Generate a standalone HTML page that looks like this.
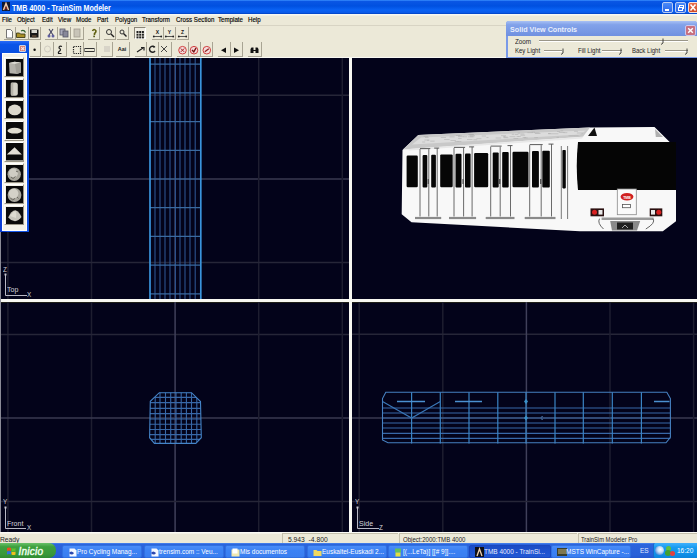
<!DOCTYPE html><html><head><meta charset="utf-8"><style>
*{margin:0;padding:0;box-sizing:border-box}
html,body{width:697px;height:558px;overflow:hidden;background:#ECE9D8;font-family:"Liberation Sans",sans-serif;position:relative}
.a{position:absolute}
#title{left:0;top:0;width:697px;height:14px;background:linear-gradient(#3a90ff 0,#0a56e4 1.5px,#0050e0 6px,#0a62f4 10px,#0a5ae8 12.5px,#0040c0 14px)}
#title .t{left:12px;top:2.5px;font-size:9px;font-weight:bold;color:#fff;white-space:nowrap;transform:scaleX(0.79);transform-origin:0 0}
#menu{left:0;top:14px;width:697px;height:12px;background:linear-gradient(#f8f8f2 0,#f8f8f2 1px,#ECE9D8 2px,#ECE9D8 11px,#d8d4c4 11.5px,#ECE9D8 12px)}
#menu span{position:absolute;top:2px;font-size:7px;color:#000;-webkit-text-stroke:0.15px #000;white-space:nowrap;transform:scaleX(0.88);transform-origin:0 0}
.b{position:absolute;border-right:1px solid #a8a493;border-bottom:1px solid #a8a493;}
#status{left:0;top:532px;width:697px;height:11px;background:linear-gradient(#fafaf4 0,#fafaf4 1px,#ECE9D8 2px)}
#status span{position:absolute;top:3.8px;font-size:6.6px;color:#222;white-space:nowrap;transform:scaleX(0.9);transform-origin:0 0}
#task{left:0;top:543px;width:697px;height:15px;background:linear-gradient(#4a88f0 0,#2c64dc 1.5px,#2860d8 12px,#2458d0 15px)}
.tb{position:absolute;top:1.5px;height:13.5px;border-radius:2px;background:linear-gradient(#4a8cf8,#3c82f4 40%,#3a7ef0);border:1px solid #3070e0}
.tb span{position:absolute;left:14px;top:2.5px;font-size:6.8px;color:#fff;white-space:nowrap;transform:scaleX(0.95);transform-origin:0 0}
.tb i{position:absolute;left:5px;top:2px;width:7px;height:8px;background:#dde8f8;border-radius:1px}
</style></head><body>
<div id="title" class="a">
<div class="a" style="left:2px;top:2px;width:8px;height:9px;background:#101830"></div>
<svg class="a" style="left:2px;top:2px" width="8" height="9"><path d="M1.5 8 L4 1.5 L6.5 8" stroke="#f0c8a8" stroke-width="1.5" fill="none"/><path d="M3.2 7.5 L4 5 L4.8 7.5" stroke="#a03020" stroke-width="0.8" fill="none"/></svg>
<div class="a t">TMB 4000 - TrainSim Modeler</div>
<div class="a" style="left:662px;top:2px;width:11px;height:11px;border-radius:2px;background:linear-gradient(#4a8af8,#2a66e8);border:1px solid #b8ccf4"><div class="a" style="left:2px;top:6px;width:4px;height:2px;background:#fff"></div></div>
<div class="a" style="left:675px;top:2px;width:11px;height:11px;border-radius:2px;background:linear-gradient(#4a8af8,#2a66e8);border:1px solid #b8ccf4"><div class="a" style="left:3px;top:2px;width:5px;height:4px;border:1px solid #fff"></div><div class="a" style="left:1.5px;top:4px;width:5px;height:4px;border:1px solid #fff;background:#3a76f0"></div></div>
<div class="a" style="left:687.5px;top:2px;width:11px;height:11px;border-radius:2px;background:linear-gradient(#e87050,#d04a28);border:1px solid #f8e0d8"></div>
<svg class="a" style="left:687.5px;top:2px" width="11" height="11"><path d="M2.5 2.5l5 6M7.5 2.5l-5 6" stroke="#fff" stroke-width="1.5"/></svg>
</div>
<div id="menu" class="a">
<span style="left:1.8px">File</span>
<span style="left:16.8px">Object</span>
<span style="left:41.5px">Edit</span>
<span style="left:58.3px">View</span>
<span style="left:75.8px">Mode</span>
<span style="left:97.3px">Part</span>
<span style="left:114.5px">Polygon</span>
<span style="left:142.3px">Transform</span>
<span style="left:175.8px">Cross Section</span>
<span style="left:217.6px">Template</span>
<span style="left:248.3px">Help</span>
</div>
<div class="b" style="left:4px;top:27px;width:12px;height:13px"></div>
<svg class="a" style="left:4px;top:27px" width="11" height="12"><path d="M2.5 2.5h4l2 2v6.5h-6z" fill="#fff" stroke="#666" stroke-width="0.9"/></svg>
<div class="b" style="left:15px;top:27px;width:14px;height:13px"></div>
<svg class="a" style="left:15px;top:27px" width="13" height="12"><path d="M1.5 6h3l1 1h4.5v3.5H1.5z" fill="#a89028" stroke="#303010" stroke-width="0.8"/><path d="M6 4 q3 -1.5 4.5 1.5" stroke="#306030" stroke-width="1.2" fill="none"/></svg>
<div class="b" style="left:28px;top:27px;width:13px;height:13px"></div>
<svg class="a" style="left:28px;top:27px" width="12" height="12"><rect x="2" y="2.5" width="8.5" height="8" fill="#181818"/><rect x="3.5" y="3" width="5.5" height="3" fill="#d8d8d0"/><rect x="4" y="8" width="4.5" height="2.5" fill="#504030"/></svg>
<div class="b" style="left:45px;top:27px;width:13px;height:13px"></div>
<svg class="a" style="left:45px;top:27px" width="12" height="12"><path d="M4 2l4 6M8 2l-4 6" stroke="#404060" stroke-width="1.1"/><circle cx="4" cy="9" r="1.5" fill="#6060a0"/><circle cx="8" cy="9" r="1.5" fill="#6060a0"/></svg>
<div class="b" style="left:58px;top:27px;width:13px;height:13px"></div>
<svg class="a" style="left:58px;top:27px" width="12" height="12"><rect x="2" y="2" width="5" height="6" fill="#aab" stroke="#556" stroke-width="0.8"/><rect x="5" y="4" width="5" height="6" fill="#889" stroke="#556" stroke-width="0.8"/></svg>
<div class="b" style="left:71px;top:27px;width:13px;height:13px"></div>
<svg class="a" style="left:71px;top:27px" width="12" height="12"><rect x="3" y="2" width="6" height="8" fill="#c8c4b8" stroke="#a09c90" stroke-width="0.8"/></svg>
<div class="b" style="left:88px;top:27px;width:12px;height:13px"></div>
<svg class="a" style="left:88px;top:27px" width="11" height="12"><path d="M4.5 4 q1.5 -3 3.5 0 q0 1.5 -1.5 2.5v1.5" stroke="#606010" stroke-width="1.6" fill="none"/><rect x="5.3" y="8.6" width="1.6" height="1.6" fill="#505010"/></svg>
<div class="b" style="left:104px;top:27px;width:12px;height:13px"></div>
<svg class="a" style="left:104px;top:27px" width="11" height="12"><circle cx="5" cy="5" r="2.5" stroke="#333" stroke-width="1" fill="none"/><path d="M7 7l3 3" stroke="#222" stroke-width="1.4"/></svg>
<div class="b" style="left:117px;top:27px;width:12px;height:13px"></div>
<svg class="a" style="left:117px;top:27px" width="11" height="12"><circle cx="5" cy="5" r="2" stroke="#333" stroke-width="1" fill="none"/><path d="M6.5 6.5l3 3" stroke="#222" stroke-width="1.4"/></svg>
<div class="b" style="left:152px;top:27px;width:12px;height:13px"></div>
<svg class="a" style="left:152px;top:27px" width="11" height="12"><text x="5.5" y="7" font-size="5" font-weight="bold" text-anchor="middle" fill="#111" font-family="Liberation Sans">X</text><path d="M1.5 9.5h8" stroke="#333" stroke-width="0.8"/><circle cx="1.8" cy="9.5" r="0.9" fill="#222"/><circle cx="9.2" cy="9.5" r="0.9" fill="#222"/></svg>
<div class="b" style="left:164px;top:27px;width:12px;height:13px"></div>
<svg class="a" style="left:164px;top:27px" width="11" height="12"><text x="5.5" y="7" font-size="5" font-weight="bold" text-anchor="middle" fill="#111" font-family="Liberation Sans">Y</text><path d="M1.5 9.5h8" stroke="#333" stroke-width="0.8"/><circle cx="1.8" cy="9.5" r="0.9" fill="#222"/><circle cx="9.2" cy="9.5" r="0.9" fill="#222"/></svg>
<div class="b" style="left:177px;top:27px;width:12px;height:13px"></div>
<svg class="a" style="left:177px;top:27px" width="11" height="12"><text x="5.5" y="7" font-size="5" font-weight="bold" text-anchor="middle" fill="#111" font-family="Liberation Sans">Z</text><path d="M1.5 9.5h8" stroke="#333" stroke-width="0.8"/><circle cx="1.8" cy="9.5" r="0.9" fill="#222"/><circle cx="9.2" cy="9.5" r="0.9" fill="#222"/></svg>
<div class="a" style="left:134px;top:27px;width:12px;height:12px;border:1px solid;border-color:#8a8678 #fff #fff #8a8678;background:#f0eee4"></div>
<svg class="a" style="left:134px;top:27px" width="12" height="12"><g fill="#222"><rect x="2.5" y="4" width="2" height="2"/><rect x="5.2" y="4" width="2" height="2"/><rect x="7.9" y="4" width="2" height="2"/><rect x="2.5" y="6.7" width="2" height="2"/><rect x="5.2" y="6.7" width="2" height="2"/><rect x="7.9" y="6.7" width="2" height="2"/><rect x="2.5" y="9.4" width="2" height="2"/><rect x="5.2" y="9.4" width="2" height="2"/><rect x="7.9" y="9.4" width="2" height="2"/></g></svg>
<div class="b" style="left:30px;top:42px;width:11px;height:15px"></div>
<svg class="a" style="left:30px;top:42px" width="10" height="14"><circle cx="4.6" cy="7.8" r="1.2" fill="#111"/></svg>
<div class="b" style="left:42px;top:42px;width:12px;height:15px"></div>
<svg class="a" style="left:42px;top:42px" width="11" height="14"><circle cx="5.5" cy="7" r="3" stroke="#d0ccc0" fill="none"/></svg>
<div class="b" style="left:54px;top:42px;width:13px;height:15px"></div>
<svg class="a" style="left:54px;top:42px" width="12" height="14"><path d="M8 4.5 q-3 -1 -3 1.5 q3 1.5 0 3.5 q-1 1 -0.5 2 h3" stroke="#222" stroke-width="1.2" fill="none"/></svg>
<div class="b" style="left:71px;top:42px;width:13px;height:15px"></div>
<svg class="a" style="left:71px;top:42px" width="12" height="14"><rect x="2.5" y="4.5" width="7" height="7" stroke="#222" stroke-width="1.2" stroke-dasharray="1.2 1" fill="none"/></svg>
<div class="b" style="left:83px;top:42px;width:14px;height:15px"></div>
<svg class="a" style="left:83px;top:42px" width="13" height="14"><path d="M1.5 6.5h10M1.5 9.5h10" stroke="#333" stroke-width="1"/><path d="M1.5 6.5v3M11.5 6.5v3" stroke="#666" stroke-width="0.8"/></svg>
<div class="b" style="left:101px;top:42px;width:12px;height:15px"></div>
<svg class="a" style="left:101px;top:42px" width="11" height="14"><rect x="3" y="4" width="6" height="6" fill="#d8d4c8"/></svg>
<div class="b" style="left:116px;top:42px;width:14px;height:15px"></div>
<svg class="a" style="left:116px;top:42px" width="13" height="14"><text x="6" y="9" font-size="5.5" font-weight="bold" text-anchor="middle" fill="#222" font-family="Liberation Sans">Aai</text></svg>
<div class="b" style="left:135px;top:42px;width:12px;height:15px"></div>
<svg class="a" style="left:135px;top:42px" width="11" height="14"><path d="M2 10l6-4M6 5.5h3v3" stroke="#222" stroke-width="1.2" fill="none"/></svg>
<div class="b" style="left:146px;top:42px;width:13px;height:15px"></div>
<svg class="a" style="left:146px;top:42px" width="12" height="14"><path d="M8.5 5 a3 3 0 1 0 0.5 4" stroke="#222" stroke-width="1.4" fill="none"/><path d="M7.5 3.5l2 1.5-2 1" fill="#222"/></svg>
<div class="b" style="left:158px;top:42px;width:14px;height:15px"></div>
<svg class="a" style="left:158px;top:42px" width="13" height="14"><path d="M3 4l6 6M9 4l-6 6" stroke="#333" stroke-width="0.9"/></svg>
<div class="b" style="left:177px;top:42px;width:12px;height:15px"></div>
<svg class="a" style="left:177px;top:42px" width="11" height="14"><circle cx="5.5" cy="8.2" r="3.8" fill="#f4dcdc" stroke="#d04040" stroke-width="1"/><path d="M3.8 6.5l3.4 3.4M7.2 6.5l-3.4 3.4" stroke="#a02020" stroke-width="1"/></svg>
<div class="b" style="left:188px;top:42px;width:13px;height:15px"></div>
<svg class="a" style="left:188px;top:42px" width="12" height="14"><circle cx="6" cy="8.2" r="3.8" fill="#f4d8d8" stroke="#d04040" stroke-width="1"/><path d="M4 8l1.8 1.8L8 6" stroke="#701010" stroke-width="1.4" fill="none"/></svg>
<div class="b" style="left:201px;top:42px;width:12px;height:15px"></div>
<svg class="a" style="left:201px;top:42px" width="11" height="14"><circle cx="5.8" cy="8.2" r="3.8" fill="#f4dcdc" stroke="#d04040" stroke-width="1"/><path d="M3.8 9.8l4-3" stroke="#902020" stroke-width="1.3"/></svg>
<div class="b" style="left:218px;top:42px;width:13px;height:15px"></div>
<svg class="a" style="left:218px;top:42px" width="12" height="14"><path d="M3 8.2l5-2.8v5.6z" fill="#111"/></svg>
<div class="b" style="left:230px;top:42px;width:13px;height:15px"></div>
<svg class="a" style="left:230px;top:42px" width="12" height="14"><path d="M9 8.2l-5-2.8v5.6z" fill="#111"/></svg>
<div class="b" style="left:248px;top:42px;width:14px;height:15px"></div>
<svg class="a" style="left:248px;top:42px" width="13" height="14"><path d="M2.5 7 L3.5 5.5 H5.5 V8 H7.5 V5.5 H9.5 L10.5 7 V11 H7.5 V9 H5.5 V11 H2.5 Z" fill="#111"/></svg>
<svg class="a" style="left:0;top:0" width="697" height="558" viewBox="0 0 697 558">
<rect x="0" y="57" width="697" height="476" fill="#f8f8f2"/>
<rect x="1" y="58" width="348" height="241" fill="#03031a"/>
<rect x="352" y="58" width="345" height="241" fill="#03031a"/>
<rect x="1" y="302" width="348" height="230" fill="#03031a"/>
<rect x="352" y="302" width="345" height="230" fill="#03031a"/>
<rect x="0" y="58" width="1" height="474" fill="#8a8a96"/>
<rect x="1" y="302" width="348" height="1" fill="#202018"/><rect x="352" y="302" width="345" height="1" fill="#202018"/>
<line x1="7.9" y1="58" x2="7.9" y2="299" stroke="#1e1e30" stroke-width="1.5"/>
<line x1="91.5" y1="58" x2="91.5" y2="299" stroke="#1e1e30" stroke-width="1.5"/>
<line x1="1" y1="95.3" x2="349" y2="95.3" stroke="#262638" stroke-width="1.5"/>
<line x1="175.1" y1="58" x2="175.1" y2="299" stroke="#40405a" stroke-width="1.5"/>
<line x1="1" y1="178.9" x2="349" y2="178.9" stroke="#3a3a50" stroke-width="1.5"/>
<line x1="258.7" y1="58" x2="258.7" y2="299" stroke="#1e1e30" stroke-width="1.5"/>
<line x1="1" y1="262.5" x2="349" y2="262.5" stroke="#262638" stroke-width="1.5"/>
<line x1="342.3" y1="58" x2="342.3" y2="299" stroke="#1e1e30" stroke-width="1.5"/>
<line x1="7.9" y1="302" x2="7.9" y2="532" stroke="#1e1e30" stroke-width="1.5"/>
<line x1="91.5" y1="302" x2="91.5" y2="532" stroke="#1e1e30" stroke-width="1.5"/>
<line x1="1" y1="334.4" x2="349" y2="334.4" stroke="#262638" stroke-width="1.5"/>
<line x1="175.1" y1="302" x2="175.1" y2="532" stroke="#40405a" stroke-width="1.5"/>
<line x1="1" y1="418.0" x2="349" y2="418.0" stroke="#3a3a50" stroke-width="1.5"/>
<line x1="258.7" y1="302" x2="258.7" y2="532" stroke="#1e1e30" stroke-width="1.5"/>
<line x1="1" y1="501.6" x2="349" y2="501.6" stroke="#262638" stroke-width="1.5"/>
<line x1="342.3" y1="302" x2="342.3" y2="532" stroke="#1e1e30" stroke-width="1.5"/>
<line x1="359.2" y1="302" x2="359.2" y2="532" stroke="#1e1e30" stroke-width="1.5"/>
<line x1="442.8" y1="302" x2="442.8" y2="532" stroke="#1e1e30" stroke-width="1.5"/>
<line x1="352" y1="334.3" x2="697" y2="334.3" stroke="#262638" stroke-width="1.5"/>
<line x1="526.4" y1="302" x2="526.4" y2="532" stroke="#40405a" stroke-width="1.5"/>
<line x1="352" y1="417.9" x2="697" y2="417.9" stroke="#3a3a50" stroke-width="1.5"/>
<line x1="610.0" y1="302" x2="610.0" y2="532" stroke="#1e1e30" stroke-width="1.5"/>
<line x1="352" y1="501.5" x2="697" y2="501.5" stroke="#262638" stroke-width="1.5"/>
<line x1="693.6" y1="302" x2="693.6" y2="532" stroke="#1e1e30" stroke-width="1.5"/>
<g stroke="#2c5490" stroke-width="1.1">
<line x1="155" y1="58" x2="155" y2="299"/>
<line x1="160" y1="58" x2="160" y2="299"/>
<line x1="165" y1="58" x2="165" y2="299"/>
<line x1="170" y1="58" x2="170" y2="299"/>
<line x1="175.4" y1="58" x2="175.4" y2="299"/>
<line x1="180" y1="58" x2="180" y2="299"/>
<line x1="185" y1="58" x2="185" y2="299"/>
<line x1="190" y1="58" x2="190" y2="299"/>
<line x1="195.2" y1="58" x2="195.2" y2="299"/>
<line x1="150" y1="64.2" x2="201" y2="64.2" stroke="#3a6aa0" stroke-width="1.2"/>
<line x1="150" y1="92.9" x2="201" y2="92.9" stroke="#3a6aa0" stroke-width="1.2"/>
<line x1="150" y1="121.6" x2="201" y2="121.6" stroke="#3a6aa0" stroke-width="1.2"/>
<line x1="150" y1="150.3" x2="201" y2="150.3" stroke="#3a6aa0" stroke-width="1.2"/>
<line x1="150" y1="179.0" x2="201" y2="179.0" stroke="#3a6aa0" stroke-width="1.2"/>
<line x1="150" y1="207.7" x2="201" y2="207.7" stroke="#3a6aa0" stroke-width="1.2"/>
<line x1="150" y1="236.4" x2="201" y2="236.4" stroke="#3a6aa0" stroke-width="1.2"/>
<line x1="150" y1="265.1" x2="201" y2="265.1" stroke="#3a6aa0" stroke-width="1.2"/>
<line x1="150" y1="293.8" x2="201" y2="293.8" stroke="#3a6aa0" stroke-width="1.2"/>
</g>
<g stroke="#3a94dc" stroke-width="1.7"><line x1="150" y1="58" x2="150" y2="299"/><line x1="200.8" y1="58" x2="200.8" y2="299"/></g>
<defs><clipPath id="oct"><path d="M159.3 392.7 L191.5 392.7 L200.5 401.5 L201.3 437.7 L195.8 443.4 L154.4 443.4 L149.6 437.7 L150.3 401.3 Z"/></clipPath></defs>
<g stroke="#3868a8" stroke-width="1.1" fill="none" clip-path="url(#oct)">
<line x1="155.2" y1="390" x2="155.2" y2="446"/>
<line x1="160" y1="390" x2="160" y2="446"/>
<line x1="165.5" y1="390" x2="165.5" y2="446"/>
<line x1="170.7" y1="390" x2="170.7" y2="446"/>
<line x1="176" y1="390" x2="176" y2="446"/>
<line x1="181.2" y1="390" x2="181.2" y2="446"/>
<line x1="186.4" y1="390" x2="186.4" y2="446"/>
<line x1="191.5" y1="390" x2="191.5" y2="446"/>
<line x1="196.8" y1="390" x2="196.8" y2="446"/>
<line x1="148" y1="397.4" x2="203" y2="397.4"/>
<line x1="148" y1="402.6" x2="203" y2="402.6"/>
<line x1="148" y1="408.4" x2="203" y2="408.4"/>
<line x1="148" y1="413.6" x2="203" y2="413.6"/>
<line x1="148" y1="419" x2="203" y2="419"/>
<line x1="148" y1="424.3" x2="203" y2="424.3"/>
<line x1="148" y1="429.5" x2="203" y2="429.5"/>
<line x1="148" y1="434.6" x2="203" y2="434.6"/>
<line x1="148" y1="439.4" x2="203" y2="439.4"/>
</g>
<path d="M159.3 392.7 L191.5 392.7 L200.5 401.5 L201.3 437.7 L195.8 443.4 L154.4 443.4 L149.6 437.7 L150.3 401.3 Z" stroke="#4484c8" stroke-width="1.1" fill="none"/>
<g stroke="#3868a8" stroke-width="1.1" fill="none">
<line x1="382.5" y1="408" x2="670.4" y2="408"/>
<line x1="382.5" y1="413" x2="670.4" y2="413"/>
<line x1="382.5" y1="418" x2="670.4" y2="418"/>
<line x1="382.5" y1="423" x2="670.4" y2="423"/>
<line x1="382.5" y1="428" x2="670.4" y2="428"/>
<line x1="382.5" y1="433.4" x2="670.4" y2="433.4"/>
<line x1="382.5" y1="438.4" x2="670.4" y2="438.4"/>
<line x1="411.6" y1="392.2" x2="411.6" y2="443.5" stroke="#3a84c4" stroke-width="1.2"/>
<line x1="440.3" y1="392.2" x2="440.3" y2="443.5" stroke="#3a84c4" stroke-width="1.2"/>
<line x1="469" y1="392.2" x2="469" y2="443.5" stroke="#3a84c4" stroke-width="1.2"/>
<line x1="497.8" y1="392.2" x2="497.8" y2="443.5" stroke="#3a84c4" stroke-width="1.2"/>
<line x1="526" y1="392.2" x2="526" y2="443.5" stroke="#3a84c4" stroke-width="1.2"/>
<line x1="555" y1="392.2" x2="555" y2="443.5" stroke="#3a84c4" stroke-width="1.2"/>
<line x1="583.3" y1="392.2" x2="583.3" y2="443.5" stroke="#3a84c4" stroke-width="1.2"/>
<line x1="612.3" y1="392.2" x2="612.3" y2="443.5" stroke="#3a84c4" stroke-width="1.2"/>
<line x1="641.4" y1="392.2" x2="641.4" y2="443.5" stroke="#3a84c4" stroke-width="1.2"/>
</g>
<path d="M397 401.5 H425 M455 401.5 H482 M654 401.5 H669.5" stroke="#4a90d0" stroke-width="1.3" fill="none"/><path d="M382.5 401.5 L411.6 418 L440.3 401.5" stroke="#3a78b8" stroke-width="1.1" fill="none"/>
<path d="M385.8 392.2 H666.8 L670.4 398.6 V437.4 L666 442.8 H388 L382.5 440 V398.6 Z" stroke="#4680c0" stroke-width="1.1" fill="none"/>
<g fill="#3a90c8"><path d="M524 401.5 L526 399 L528 401.5 L526 404 Z"/><path d="M524 418 L526 415.5 L528 418 L526 420.5 Z"/></g>
<path d="M543 416.5 q-2 -0.5 -2 1.5 q0 2 2 1.5" stroke="#4a70a0" stroke-width="0.8" fill="none"/>
<path d="M5.5 274.5 V295.5 H27" stroke="#b8b8c4" stroke-width="1" fill="none"/>
<rect x="4.5" y="273.5" width="2" height="2" fill="#c8c8d0"/>
<path d="M5.5 507.5 V528.5 H26" stroke="#b8b8c4" stroke-width="1" fill="none"/>
<rect x="4.5" y="506.5" width="2" height="2" fill="#c8c8d0"/>
<path d="M357.5 507.5 V528.5 H379" stroke="#b8b8c4" stroke-width="1" fill="none"/>
<rect x="356.5" y="506.5" width="2" height="2" fill="#c8c8d0"/>
<g>
<path d="M402.5 150 L418.3 134.9 L590 127.5 L654.5 127 L669.7 142 L676 142 L676 221.2 L662.8 231.3 L580 231.3 L411.5 222.3 L401.7 214.3 Z" fill="#f8f8f8"/>
<path d="M403 149.5 L418.3 134.9 L590 127.5 L583 136.7 Z" fill="#c8c8c8"/>
<path d="M412 144.5 L421 137.5 L586 130.5 L580 134.5 Z" fill="#dcdcdc"/><path d="M404.5 149.3 L583 136.7 L582 138.5 L410 150.5 Z" fill="#e8e8e8"/>
<path d="M655 129 L663 137 L655.8 137 Z" fill="#b0b0b0"/>
<rect x="458.1" y="138.0" width="3.5" height="0.8" fill="#a8a8a8" opacity="0.6"/><rect x="516.6" y="136.0" width="2.3" height="0.8" fill="#a8a8a8" opacity="0.6"/><rect x="422.1" y="141.6" width="3.0" height="0.8" fill="#a8a8a8" opacity="0.6"/><rect x="457.5" y="141.2" width="3.9" height="0.8" fill="#a8a8a8" opacity="0.6"/><rect x="553.8" y="133.4" width="4.6" height="0.8" fill="#a8a8a8" opacity="0.6"/><rect x="444.1" y="139.2" width="5.5" height="0.8" fill="#a8a8a8" opacity="0.6"/><rect x="503.7" y="137.4" width="4.7" height="0.8" fill="#a8a8a8" opacity="0.6"/><rect x="430.2" y="140.7" width="4.4" height="0.8" fill="#a8a8a8" opacity="0.6"/><rect x="468.2" y="134.0" width="5.5" height="0.8" fill="#a8a8a8" opacity="0.6"/><rect x="495.6" y="137.6" width="5.5" height="0.8" fill="#a8a8a8" opacity="0.6"/><rect x="534.3" y="137.3" width="3.6" height="0.8" fill="#a8a8a8" opacity="0.6"/><rect x="548.1" y="133.4" width="5.7" height="0.8" fill="#a8a8a8" opacity="0.6"/><rect x="560.6" y="130.4" width="2.5" height="0.8" fill="#a8a8a8" opacity="0.6"/><rect x="454.7" y="141.1" width="3.7" height="0.8" fill="#a8a8a8" opacity="0.6"/><rect x="520.3" y="133.6" width="4.0" height="0.8" fill="#a8a8a8" opacity="0.6"/><rect x="481.7" y="135.6" width="4.3" height="0.8" fill="#a8a8a8" opacity="0.6"/><rect x="513.5" y="138.1" width="4.7" height="0.8" fill="#a8a8a8" opacity="0.6"/><rect x="568.6" y="135.4" width="6.0" height="0.8" fill="#a8a8a8" opacity="0.6"/><rect x="527.4" y="132.3" width="5.4" height="0.8" fill="#a8a8a8" opacity="0.6"/><rect x="574.3" y="135.5" width="4.3" height="0.8" fill="#a8a8a8" opacity="0.6"/><rect x="534.2" y="132.4" width="5.3" height="0.8" fill="#a8a8a8" opacity="0.6"/><rect x="511.8" y="133.9" width="2.3" height="0.8" fill="#a8a8a8" opacity="0.6"/><rect x="556.6" y="136.9" width="2.4" height="0.8" fill="#a8a8a8" opacity="0.6"/><rect x="548.1" y="133.2" width="2.6" height="0.8" fill="#a8a8a8" opacity="0.6"/><rect x="467.0" y="139.2" width="5.5" height="0.8" fill="#a8a8a8" opacity="0.6"/><rect x="427.1" y="139.8" width="2.2" height="0.8" fill="#a8a8a8" opacity="0.6"/><rect x="535.0" y="133.2" width="5.5" height="0.8" fill="#a8a8a8" opacity="0.6"/><rect x="576.9" y="132.6" width="6.0" height="0.8" fill="#a8a8a8" opacity="0.6"/><rect x="469.5" y="134.2" width="4.4" height="0.8" fill="#a8a8a8" opacity="0.6"/><rect x="425.0" y="137.0" width="3.6" height="0.8" fill="#a8a8a8" opacity="0.6"/><rect x="517.7" y="132.7" width="2.2" height="0.8" fill="#a8a8a8" opacity="0.6"/><rect x="558.8" y="132.0" width="5.8" height="0.8" fill="#a8a8a8" opacity="0.6"/><rect x="563.5" y="132.3" width="3.8" height="0.8" fill="#a8a8a8" opacity="0.6"/><rect x="503.2" y="136.7" width="4.4" height="0.8" fill="#a8a8a8" opacity="0.6"/><rect x="509.5" y="136.3" width="5.8" height="0.8" fill="#a8a8a8" opacity="0.6"/><rect x="501.1" y="135.3" width="4.9" height="0.8" fill="#a8a8a8" opacity="0.6"/><rect x="458.0" y="136.3" width="5.9" height="0.8" fill="#a8a8a8" opacity="0.6"/><rect x="503.4" y="136.1" width="2.0" height="0.8" fill="#a8a8a8" opacity="0.6"/><rect x="486.4" y="137.0" width="2.1" height="0.8" fill="#a8a8a8" opacity="0.6"/><rect x="518.5" y="136.0" width="2.2" height="0.8" fill="#a8a8a8" opacity="0.6"/><rect x="520.4" y="134.8" width="4.7" height="0.8" fill="#a8a8a8" opacity="0.6"/><rect x="476.4" y="138.3" width="5.0" height="0.8" fill="#a8a8a8" opacity="0.6"/><rect x="423.5" y="136.1" width="4.7" height="0.8" fill="#a8a8a8" opacity="0.6"/><rect x="574.1" y="130.9" width="3.8" height="0.8" fill="#a8a8a8" opacity="0.6"/><rect x="514.8" y="134.0" width="3.5" height="0.8" fill="#a8a8a8" opacity="0.6"/><rect x="470.0" y="136.3" width="4.4" height="0.8" fill="#a8a8a8" opacity="0.6"/><rect x="468.1" y="136.4" width="5.1" height="0.8" fill="#a8a8a8" opacity="0.6"/><rect x="424.3" y="139.6" width="4.9" height="0.8" fill="#a8a8a8" opacity="0.6"/><rect x="469.6" y="135.2" width="5.2" height="0.8" fill="#a8a8a8" opacity="0.6"/><rect x="458.2" y="135.5" width="3.7" height="0.8" fill="#a8a8a8" opacity="0.6"/><rect x="531.7" y="131.7" width="3.3" height="0.8" fill="#a8a8a8" opacity="0.6"/><rect x="473.4" y="139.4" width="3.8" height="0.8" fill="#a8a8a8" opacity="0.6"/><rect x="556.9" y="131.1" width="3.3" height="0.8" fill="#a8a8a8" opacity="0.6"/><rect x="524.0" y="137.5" width="3.8" height="0.8" fill="#a8a8a8" opacity="0.6"/><rect x="456.0" y="135.1" width="4.1" height="0.8" fill="#a8a8a8" opacity="0.6"/><rect x="450.5" y="140.2" width="5.4" height="0.8" fill="#a8a8a8" opacity="0.6"/><rect x="449.4" y="136.5" width="5.2" height="0.8" fill="#a8a8a8" opacity="0.6"/><rect x="522.7" y="137.0" width="3.4" height="0.8" fill="#a8a8a8" opacity="0.6"/><rect x="440.8" y="137.0" width="5.2" height="0.8" fill="#a8a8a8" opacity="0.6"/><rect x="463.4" y="136.4" width="3.7" height="0.8" fill="#a8a8a8" opacity="0.6"/>
<path d="M588 136 L597 136 L594.5 127.5 Z" fill="#111"/>
<path d="M578 142 H676 V190 H578 Q575.5 166 578 142 Z" fill="#050505"/>
<rect x="406.6" y="155.6" width="11.2" height="31.7" rx="1.2" fill="#060606"/>
<rect x="440.2" y="154.4" width="12.5" height="32.9" rx="1.2" fill="#060606"/>
<rect x="474.1" y="153.1" width="14.1" height="34.2" rx="1.2" fill="#060606"/>
<rect x="512.5" y="151.8" width="16.0" height="35.5" rx="1.2" fill="#060606"/>
<path d="M420 216.5 V149.1 M428.8 149.1 V216.5 M437.2 148.1 V216.5" stroke="#5a5a5a" stroke-width="0.9" fill="none"/>
<path d="M420 148.6 H430.3 M434.2 148.1 H439.2" stroke="#5a5a5a" stroke-width="1" fill="none"/>
<rect x="422.6" y="155.0" width="4.7" height="32.6" rx="1" fill="#060606"/>
<rect x="431.2" y="154.7" width="4.7" height="32.9" rx="1" fill="#060606"/>
<path d="M415 218 H441.2" stroke="#8a8a8a" stroke-width="2.2"/>
<path d="M428.3 179 V184" stroke="#555" stroke-width="1.4"/>
<path d="M454 216.5 V147.9 M463.6 147.9 V216.5 M472.1 146.9 V216.5" stroke="#5a5a5a" stroke-width="0.9" fill="none"/>
<path d="M454 147.4 H465.1 M469.1 146.9 H474.1" stroke="#5a5a5a" stroke-width="1" fill="none"/>
<rect x="455.5" y="153.8" width="6.0" height="33.8" rx="1" fill="#060606"/>
<rect x="465" y="153.5" width="5.6" height="34.1" rx="1" fill="#060606"/>
<path d="M449 218 H476.1" stroke="#8a8a8a" stroke-width="2.2"/>
<path d="M463.1 179 V184" stroke="#555" stroke-width="1.4"/>
<path d="M490.7 216.5 V146.6 M500.2 146.6 V216.5 M510.5 145.6 V216.5" stroke="#5a5a5a" stroke-width="0.9" fill="none"/>
<path d="M490.7 146.1 H501.7 M507.5 145.6 H512.5" stroke="#5a5a5a" stroke-width="1" fill="none"/>
<rect x="492.7" y="152.5" width="6.0" height="35.1" rx="1" fill="#060606"/>
<rect x="502.2" y="152.1" width="6.5" height="35.5" rx="1" fill="#060606"/>
<path d="M485.7 218 H514.5" stroke="#8a8a8a" stroke-width="2.2"/>
<path d="M499.7 179 V184" stroke="#555" stroke-width="1.4"/>
<path d="M529.7 216.5 V145.1 M541.2 145.1 V216.5 M551.5 144.1 V216.5" stroke="#5a5a5a" stroke-width="0.9" fill="none"/>
<path d="M529.7 144.6 H542.7 M548.5 144.1 H553.5" stroke="#5a5a5a" stroke-width="1" fill="none"/>
<rect x="532" y="151.1" width="6.9" height="36.5" rx="1" fill="#060606"/>
<rect x="542.3" y="150.7" width="7.5" height="36.9" rx="1" fill="#060606"/>
<path d="M524.7 218 H555.5" stroke="#8a8a8a" stroke-width="2.2"/>
<path d="M540.7 179 V184" stroke="#555" stroke-width="1.4"/>
<path d="M561.3 219 V146 M567.6 219 V146" stroke="#6a6a6a" stroke-width="0.9"/>
<rect x="562.4" y="150.0" width="3.4" height="38.4" rx="0.8" fill="#060606"/>
<rect x="617.3" y="189" width="19" height="25.7" fill="#fafafa" stroke="#8a8a8a" stroke-width="0.8"/>
<ellipse cx="627" cy="196.8" rx="6.4" ry="3.8" fill="#d02020"/>
<text x="627" y="198.5" font-size="3.5" font-weight="bold" text-anchor="middle" fill="#fff" font-family="Liberation Sans">TMB</text>
<rect x="622.5" y="204.5" width="8" height="3.2" fill="#fff" stroke="#555" stroke-width="0.8"/>
<rect x="590.5" y="208.4" width="13.5" height="7.9" fill="#2a1010"/><circle cx="594.5" cy="212.3" r="2.5" fill="#d82020"/><rect x="598.5" y="210" width="4" height="4.6" fill="#e8e8e8"/>
<rect x="649.7" y="208.4" width="12.6" height="7.9" fill="#2a1010"/><rect x="651" y="210" width="4" height="4.6" fill="#e8e8e8"/><circle cx="658.8" cy="212.3" r="2.5" fill="#d82020"/>
<path d="M601.6 218.7 H653.6" stroke="#9a9a9a" stroke-width="2.5"/><path d="M599.5 218.7 Q597 223 603.5 229 M653 218.7 Q656 223 645.8 229" stroke="#555" stroke-width="0.9" fill="none"/>
<path d="M610.2 221 H640.2 L637 230.5 H612 Z" fill="#8a8a8a"/><rect x="617" y="222.5" width="16" height="7" fill="#202020"/><path d="M622 228 l3 -3 l3 3" stroke="#ccc" stroke-width="0.8" fill="none"/>
</g>
</svg>
<div class="a" style="left:6.5px;top:286.2px;font-size:7.8px;color:#d4d4dc;white-space:nowrap;transform:scaleX(0.9);transform-origin:0 0;line-height:1">Top</div>
<div class="a" style="left:2.8px;top:265.5px;font-size:7px;color:#d4d4dc;white-space:nowrap;transform:scaleX(0.9);transform-origin:0 0;line-height:1">Z</div>
<div class="a" style="left:26.8px;top:291.3px;font-size:7px;color:#d4d4dc;white-space:nowrap;transform:scaleX(0.9);transform-origin:0 0;line-height:1">X</div>
<div class="a" style="left:6.5px;top:520px;font-size:7.8px;color:#d4d4dc;white-space:nowrap;transform:scaleX(0.9);transform-origin:0 0;line-height:1">Front</div>
<div class="a" style="left:2.8px;top:498.3px;font-size:7px;color:#d4d4dc;white-space:nowrap;transform:scaleX(0.9);transform-origin:0 0;line-height:1">Y</div>
<div class="a" style="left:26.5px;top:524px;font-size:7px;color:#d4d4dc;white-space:nowrap;transform:scaleX(0.9);transform-origin:0 0;line-height:1">X</div>
<div class="a" style="left:358.5px;top:520px;font-size:7.8px;color:#d4d4dc;white-space:nowrap;transform:scaleX(0.9);transform-origin:0 0;line-height:1">Side</div>
<div class="a" style="left:354.8px;top:498.3px;font-size:7px;color:#d4d4dc;white-space:nowrap;transform:scaleX(0.9);transform-origin:0 0;line-height:1">Y</div>
<div class="a" style="left:379.3px;top:524px;font-size:7px;color:#d4d4dc;white-space:nowrap;transform:scaleX(0.9);transform-origin:0 0;line-height:1">Z</div>
<div class="a" style="left:0;top:41px;width:29px;height:191px;background:linear-gradient(90deg,#0a3ad0,#1a5cf0 40%,#1050e0);border-radius:2px 2px 0 0"></div>
<div class="a" style="left:0;top:41.4px;width:29px;height:12px;background:linear-gradient(#2a6cf8,#0a54e8 30%,#0a50e0)"></div>
<div class="a" style="left:18.5px;top:44.5px;width:7.5px;height:7.5px;border-radius:1px;background:#d88070;border:1px solid #c8d0e8"></div>
<svg class="a" style="left:18.5px;top:44.5px" width="7.5" height="7.5"><path d="M2.2 2.2l3 3M5.2 2.2l-3 3" stroke="#f8e8e8" stroke-width="1.1"/></svg>
<div class="a" style="left:2px;top:53.2px;width:25px;height:177.5px;background:#f4f2e8;border:1px solid #fff"></div>
<div class="a" style="left:4px;top:57.0px;width:20px;height:20px;border:1px solid;border-color:#fff #9a9688 #9a9688 #fff"></div>
<svg class="a" style="left:5.6px;top:58.5px" width="17.4" height="17.4"><rect width="17.4" height="17.4" fill="#0a0a0a"/><path d="M3 4 L8.5 2.8 L14.8 3.6 L15 13.5 L11 15 L3.6 14.2 Z" fill="#b4b2aa"/><path d="M3 4 L8.5 2.8 L14.8 3.6 L9 5 Z" fill="#dcdad2"/><path d="M9 5 L14.8 3.6 L15 13.5 L10.5 15 Z" fill="#a09e96"/></svg>
<div class="a" style="left:4px;top:78.2px;width:20px;height:20px;border:1px solid;border-color:#fff #9a9688 #9a9688 #fff"></div>
<svg class="a" style="left:5.6px;top:79.7px" width="17.4" height="17.4"><rect width="17.4" height="17.4" fill="#0a0a0a"/><rect x="4.8" y="2.4" width="7" height="13.4" rx="2.5" fill="#d4d2c8"/><rect x="4.8" y="2.4" width="2.5" height="13.4" rx="1.2" fill="#b6b4aa"/></svg>
<div class="a" style="left:4px;top:99.4px;width:20px;height:20px;border:1px solid;border-color:#fff #9a9688 #9a9688 #fff"></div>
<svg class="a" style="left:5.6px;top:100.9px" width="17.4" height="17.4"><rect width="17.4" height="17.4" fill="#0a0a0a"/><ellipse cx="8.7" cy="8.9" rx="6.6" ry="5.3" fill="#dcd9cc"/></svg>
<div class="a" style="left:4px;top:120.6px;width:20px;height:20px;border:1px solid;border-color:#fff #9a9688 #9a9688 #fff"></div>
<svg class="a" style="left:5.6px;top:122.1px" width="17.4" height="17.4"><rect width="17.4" height="17.4" fill="#0a0a0a"/><ellipse cx="8.65" cy="8.7" rx="7.2" ry="2.9" fill="#e0ddd0"/></svg>
<div class="a" style="left:4px;top:141.8px;width:20px;height:20px;border:1px solid;border-color:#fff #9a9688 #9a9688 #fff"></div>
<svg class="a" style="left:5.6px;top:143.3px" width="17.4" height="17.4"><rect width="17.4" height="17.4" fill="#0a0a0a"/><path d="M0.8 11.4 L8.6 4.3 L15.8 11.4 Z" fill="#e2dfd4"/></svg>
<div class="a" style="left:4px;top:163.0px;width:20px;height:20px;border:1px solid;border-color:#fff #9a9688 #9a9688 #fff"></div>
<svg class="a" style="left:5.6px;top:164.5px" width="17.4" height="17.4"><rect width="17.4" height="17.4" fill="#0a0a0a"/><circle cx="8.2" cy="9.2" r="6.7" fill="#a8a69c"/><circle cx="7.5" cy="8" r="4.5" fill="#cfcdc4"/><path d="M5 12 l2 1.5 l2.5 -2 M10 6 l2 1" stroke="#6a6860" stroke-width="1" fill="none"/></svg>
<div class="a" style="left:4px;top:184.2px;width:20px;height:20px;border:1px solid;border-color:#fff #9a9688 #9a9688 #fff"></div>
<svg class="a" style="left:5.6px;top:185.7px" width="17.4" height="17.4"><rect width="17.4" height="17.4" fill="#0a0a0a"/><circle cx="8.5" cy="9" r="6.9" fill="#aaa89e"/><circle cx="7.6" cy="7.6" r="4.8" fill="#d4d2c8"/><path d="M4.5 12 l2 2 l2.5 -1.5 M11 11 l1.5 1.5" stroke="#6a6860" stroke-width="1" fill="none"/></svg>
<div class="a" style="left:4px;top:205.4px;width:20px;height:20px;border:1px solid;border-color:#fff #9a9688 #9a9688 #fff"></div>
<svg class="a" style="left:5.6px;top:206.9px" width="17.4" height="17.4"><rect width="17.4" height="17.4" fill="#0a0a0a"/><path d="M2.2 10.5 Q5 3.5 9.5 3.2 Q13.5 5 15.5 10 Q12.5 14 9 14.2 Q4.5 13.5 2.2 10.5 Z" fill="#c8c6bc"/><path d="M4 9 Q7 4.5 9.5 4 Q11 7 10 11 Z" fill="#dedcd2"/></svg>
<div class="a" style="left:506px;top:21px;width:191px;height:37px;background:#7a9ae8;border-radius:3px 3px 0 0"></div>
<div class="a" style="left:506px;top:21px;width:191px;height:15.4px;background:linear-gradient(#a8c0f4,#82a2ea 25%,#7898e4 70%,#7090e0);border-radius:3px 3px 0 0"></div>
<div class="a" style="left:510px;top:25px;font-size:8px;font-weight:bold;color:#e8eefc;white-space:nowrap;transform:scaleX(0.895);transform-origin:0 0">Solid View Controls</div>
<div class="a" style="left:684.5px;top:24.5px;width:11px;height:11px;border-radius:2px;background:#c87080;border:1px solid #c8c8f0"></div>
<svg class="a" style="left:684.5px;top:24.5px" width="11" height="11"><path d="M3.2 3.2l4.6 4.6M7.8 3.2l-4.6 4.6" stroke="#fff" stroke-width="1.4"/></svg>
<div class="a" style="left:508px;top:36.4px;width:189px;height:20.8px;background:#ECE9D8"></div>
<div class="a" style="left:515px;top:37.5px;font-size:7px;color:#222;white-space:nowrap;transform:scaleX(0.9);transform-origin:0 0">Zoom</div>
<div class="a" style="left:539px;top:39.5px;width:149px;height:2px;border-top:1px solid #9a9688;border-bottom:1px solid #fff"></div>
<svg class="a" style="left:660px;top:38px" width="6" height="7"><path d="M3 0.5V5 L1 6.5" stroke="#333" stroke-width="0.9" fill="none"/></svg>
<div class="a" style="left:515px;top:47px;font-size:7px;color:#222;white-space:nowrap;transform:scaleX(0.86);transform-origin:0 0">Key Light</div>
<div class="a" style="left:544px;top:50px;width:18px;height:2px;border-top:1px solid #9a9688;border-bottom:1px solid #fff"></div>
<svg class="a" style="left:560px;top:48px" width="6" height="7"><path d="M3 0.5V5 L1 6.5" stroke="#333" stroke-width="0.9" fill="none"/></svg>
<div class="a" style="left:578px;top:47px;font-size:7px;color:#222;white-space:nowrap;transform:scaleX(0.86);transform-origin:0 0">Fill Light</div>
<div class="a" style="left:602px;top:50px;width:20px;height:2px;border-top:1px solid #9a9688;border-bottom:1px solid #fff"></div>
<svg class="a" style="left:618px;top:48px" width="6" height="7"><path d="M3 0.5V5 L1 6.5" stroke="#333" stroke-width="0.9" fill="none"/></svg>
<div class="a" style="left:632px;top:47px;font-size:7px;color:#222;white-space:nowrap;transform:scaleX(0.86);transform-origin:0 0">Back Light</div>
<div class="a" style="left:665px;top:50px;width:23px;height:2px;border-top:1px solid #9a9688;border-bottom:1px solid #fff"></div>
<svg class="a" style="left:684px;top:48px" width="6" height="7"><path d="M3 0.5V5 L1 6.5" stroke="#333" stroke-width="0.9" fill="none"/></svg>
<div id="status" class="a">
<span style="left:0px;transform:scaleX(1.02)">Ready</span>
<div class="a" style="left:282px;top:1px;width:116px;height:10px;border-left:1px solid #c4c0ac;border-top:1px solid #c4c0ac"></div>
<div class="a" style="left:399px;top:1px;width:178px;height:10px;border-left:1px solid #c4c0ac;border-top:1px solid #c4c0ac"></div>
<div class="a" style="left:578px;top:1px;width:119px;height:10px;border-left:1px solid #c4c0ac;border-top:1px solid #c4c0ac"></div>
<span style="left:287.5px;transform:scaleX(1.02)">5.943 &nbsp;-4.800</span>
<span style="left:403px;transform:scaleX(0.92)">Object:2000:TMB 4000</span>
<span style="left:581px;transform:scaleX(0.88)">TrainSim Modeler Pro</span>
</div>
<div id="task" class="a">
<div class="a" style="left:0;top:0;width:56px;height:15px;border-radius:0 7px 7px 0;background:linear-gradient(#68c068,#3ea03e 25%,#38983a 75%,#2e8a30)"></div>
<svg class="a" style="left:6px;top:3px" width="10" height="10"><path d="M1 2 q2 -1 4 0 v3 q-2 -1 -4 0z" fill="#e85020"/><path d="M5.5 2 q2 1 4 0 v3 q-2 1 -4 0z" fill="#60c030"/><path d="M1 5.5 q2 -1 4 0 v3 q-2 -1 -4 0z" fill="#3070e0"/><path d="M5.5 5.5 q2 1 4 0 v3 q-2 1 -4 0z" fill="#f0c020"/></svg>
<div class="a" style="left:18.5px;top:2.5px;font-size:10px;font-style:italic;color:#f0fff0;white-space:nowrap;line-height:1.2;letter-spacing:0.25px;-webkit-text-stroke:0.4px #f0fff0">Inicio</div>
<div class="tb" style="left:62.0px;width:80px"><svg class="a" style="left:5px;top:2px" width="9" height="9"><path d="M1.5 0.5h5l2 2v6h-7z" fill="#f4f8ff"/><path d="M1 5 q2 -3 5 0 q-2 3 -5 0" fill="#2a48b0"/></svg><span>Pro Cycling Manag...</span></div>
<div class="tb" style="left:143.5px;width:80px"><svg class="a" style="left:5px;top:2px" width="9" height="9"><path d="M1.5 0.5h5l2 2v6h-7z" fill="#f4f8ff"/><path d="M1 5 q2 -3 5 0 q-2 3 -5 0" fill="#2a48b0"/></svg><span>trensim.com :: Veu...</span></div>
<div class="tb" style="left:225.0px;width:80px"><svg class="a" style="left:5px;top:2px" width="9" height="9"><rect x="0.5" y="1.5" width="8" height="7" fill="#f0e8b0"/><rect x="1.5" y="0.5" width="5" height="5" fill="#fff"/></svg><span>Mis documentos</span></div>
<div class="tb" style="left:306.5px;width:80px"><svg class="a" style="left:5px;top:2px" width="9" height="9"><path d="M0.5 2h3l1 1h4v5h-8z" fill="#f0d860"/></svg><span>Euskaltel-Euskadi 2...</span></div>
<div class="tb" style="left:388.0px;width:80px"><svg class="a" style="left:5px;top:2px" width="9" height="9"><rect x="1" y="0.5" width="6" height="4" fill="#60c060"/><rect x="1.5" y="4.5" width="5" height="4" fill="#e0e040"/></svg><span>[(...LeTa)] [[# 9]]....</span></div>
<div class="tb" style="left:469.0px;width:82px;background:linear-gradient(#1a4cc4,#1e52d0 50%,#2258d4);border-color:#1a48c0"><svg class="a" style="left:5px;top:1.5px" width="9" height="10"><rect width="9" height="10" fill="#101018"/><path d="M2 9 L4.5 2 L7 9" stroke="#f0d0b0" stroke-width="1.3" fill="none"/></svg><span style="color:#e8eeff">TMB 4000 - TrainSi...</span></div>
<div class="tb" style="left:551.0px;width:80px"><svg class="a" style="left:5px;top:2px" width="10" height="9"><rect width="10" height="8" fill="#3a4030"/><rect x="1" y="1" width="8" height="5" fill="#807850"/></svg><span>MSTS WinCapture -...</span></div>
<div class="a" style="left:653px;top:0;width:44px;height:15px;background:linear-gradient(#40b0fc,#189cf0 30%,#1090e8 70%,#0c84dc);border-left:1px solid #1a68c8;border-radius:2px 0 0 2px"></div>
<div class="a" style="left:640px;top:4px;font-size:6.5px;color:#e0e8ff">ES</div>
<div class="a" style="left:655px;top:3px;width:8.5px;height:9px;border-radius:50%;background:radial-gradient(circle at 60% 40%,#fff 0,#c8e0f8 35%,#3a80d8 80%)"></div>
<div class="a" style="left:666px;top:2.5px;width:5px;height:5px;border-radius:50%;background:#60c040"></div><div class="a" style="left:665px;top:7px;width:6px;height:6px;border-radius:50%;background:#40a030"></div><div class="a" style="left:669.5px;top:8px;width:5px;height:5px;border-radius:50%;background:#e04040"></div>
<div class="a" style="left:677px;top:4px;font-size:6.5px;color:#fff">16:20</div>
</div>
</body></html>
